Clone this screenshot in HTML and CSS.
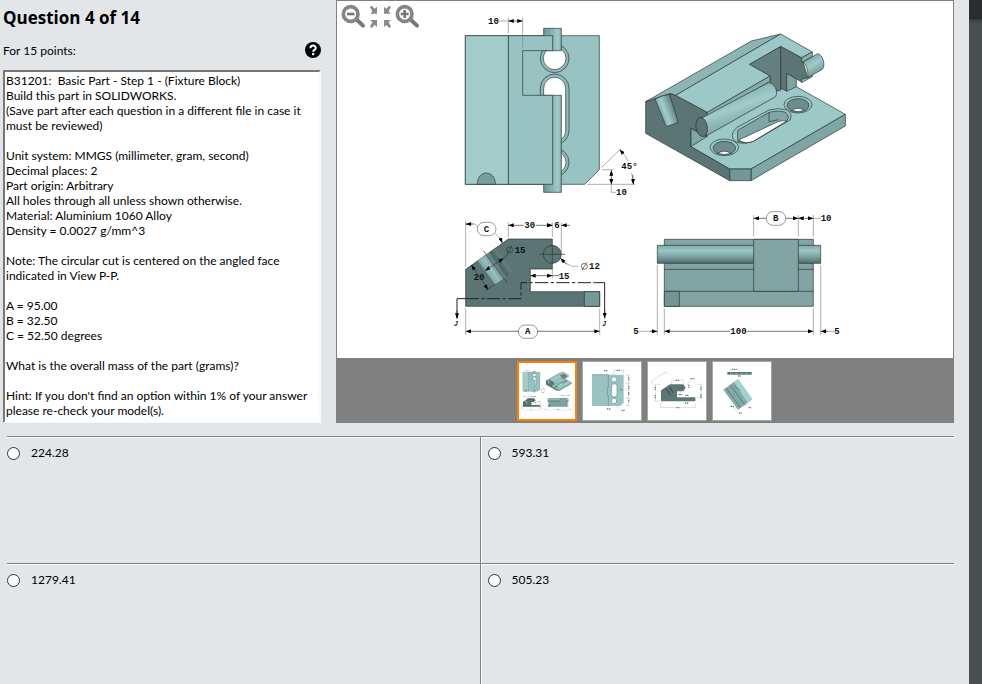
FILE: index.html
```html
<!DOCTYPE html>
<html lang="en">
<head>
  <meta charset="UTF-8">
  <meta name="viewport" content="width=device-width, initial-scale=1.0">
  <title>Question 4 of 14</title>
  <link rel="stylesheet" href="styles.css">
</head>
<body>

  <main class="exam">
    <div class="top">

      <section class="question">
        <h1>Question 4 of 14</h1>
        <div class="points">
          <label for="question-text">For 15 points:</label>
          <button type="button" class="help" aria-label="Help">
            <svg viewBox="0 0 16 16">
              <circle cx="8" cy="8" r="8" fill="#000"/>
              <path d="M5.4 6.2C5.4 2.7 10.8 2.8 10.8 6C10.8 7.9 8.1 7.8 8.1 9.7" fill="none" stroke="#fff" stroke-width="2"/>
              <rect x="7" y="11" width="2.2" height="2.2" fill="#fff"/>
            </svg>
          </button>
        </div>
        <textarea id="question-text" class="question-text" readonly>B31201:  Basic Part - Step 1 - (Fixture Block)
Build this part in SOLIDWORKS.
(Save part after each question in a different file in case it must be reviewed)

Unit system: MMGS (millimeter, gram, second)
Decimal places: 2
Part origin: Arbitrary
All holes through all unless shown otherwise.
Material: Aluminium 1060 Alloy
Density = 0.0027 g/mm^3

Note: The circular cut is centered on the angled face indicated in View P-P.

A = 95.00
B = 32.50
C = 52.50 degrees

What is the overall mass of the part (grams)?

Hint: If you don't find an option within 1% of your answer please re-check your model(s).</textarea>
      </section>

      <section class="viewer">
        <div class="tools">
          <button type="button" aria-label="Zoom out">
            <svg viewBox="0 0 75 75">
              <path d="M48 48L66 65" stroke="#777" stroke-width="12" stroke-linecap="round"/>
              <circle cx="29" cy="30" r="22" fill="#fff" stroke="#858585" stroke-width="11"/>
              <path d="M18 30H40" stroke="#777" stroke-width="8"/>
            </svg>
          </button>
          <button type="button" aria-label="Fit to window">
            <svg viewBox="0 0 75 75">
              <g id="fit-arrow" fill="#8a8a8a">
                <path d="M6 9L11 5L20 14L27 8V29H7L13 22Z"/>
              </g>
              <use href="#fit-arrow" transform="matrix(-1 0 0 1 75 0)"/>
              <use href="#fit-arrow" transform="matrix(1 0 0 -1 0 77)"/>
              <use href="#fit-arrow" transform="matrix(-1 0 0 -1 75 77)"/>
            </svg>
          </button>
          <button type="button" aria-label="Zoom in">
            <svg viewBox="0 0 75 75">
              <path d="M48 48L66 65" stroke="#777" stroke-width="12" stroke-linecap="round"/>
              <circle cx="29" cy="30" r="22" fill="#fff" stroke="#858585" stroke-width="11"/>
              <path d="M17 30H41M29 18V42" stroke="#777" stroke-width="8"/>
            </svg>
          </button>
        </div>

        <svg class="drawing" viewBox="337 1 616 357" role="img" aria-label="Fixture block, four views">
          <defs>
            <linearGradient id="rod-v">
              <stop offset="0" stop-color="#6f9695"/><stop offset=".5" stop-color="#87b3b2"/><stop offset=".8" stop-color="#a1cccb"/><stop offset="1" stop-color="#82aead"/>
            </linearGradient>
            <linearGradient id="rod-h" x2="0" y2="1">
              <stop offset="0" stop-color="#80aaa9"/><stop offset=".3" stop-color="#9cc8c7"/><stop offset=".6" stop-color="#7fa6a5"/><stop offset="1" stop-color="#516b6a"/>
            </linearGradient>
            <linearGradient id="rod-iso" x1=".3" y1=".2" x2=".65" y2=".9">
              <stop offset="0" stop-color="#84adac"/><stop offset=".4" stop-color="#a1cccb"/><stop offset="1" stop-color="#6c9190"/>
            </linearGradient>
            <linearGradient id="bore" gradientUnits="userSpaceOnUse" x1="98" y1="167" x2="150" y2="131">
              <stop offset="0" stop-color="#7ba3a2"/><stop offset=".3" stop-color="#96c1c0"/><stop offset=".55" stop-color="#6d9291"/><stop offset=".75" stop-color="#4b6362"/><stop offset="1" stop-color="#648281"/>
            </linearGradient>
            <linearGradient id="bore-iso" gradientUnits="userSpaceOnUse" x1="72" y1="280" x2="118" y2="262">
              <stop offset="0" stop-color="#7ba2a1"/><stop offset=".4" stop-color="#a1cccb"/><stop offset="1" stop-color="#62807f"/>
            </linearGradient>
            <marker id="arrow" viewBox="0 0 16 12" refX="16" refY="6" markerWidth="16" markerHeight="12" markerUnits="userSpaceOnUse" orient="auto-start-reverse">
              <path d="M0 0L16 6L0 12Z"/>
            </marker>
          </defs>

          <g id="views">
            <!-- top view -->
            <svg x="450" y="0" width="200" height="210" viewBox="0 0 600 630">
              <g class="part">
                <path d="M46 107H448V509L404 553H46Z" fill="#98c3c2"/>
                <circle cx="314" cy="175" r="43" fill="#8fbab9"/>
                <circle cx="314" cy="175" r="34" fill="#fff"/>
                <rect x="271" y="222" width="86" height="213" rx="43" fill="#8fbab9"/>
                <rect x="281" y="232" width="66" height="193" rx="33" fill="#fff"/>
                <circle cx="314" cy="487" r="43" fill="#8fbab9"/>
                <circle cx="314" cy="487" r="34" fill="#fff"/>
                <rect x="281" y="85" width="53" height="67" fill="url(#rod-v)"/>
                <rect x="281" y="286" width="53" height="291" fill="url(#rod-v)"/>
                <path d="M175 107H308V152H218V286H308V553H175Z" fill="#98c3c2"/>
                <path d="M46 107H175V553H46Z" fill="#a3cbca"/>
                <path d="M82 553C82 508 136 508 136 553Z" fill="#789e9d"/>
              </g>
              <g class="leader">
                <path d="M175 100V53M218 146V53M147 63H175M456 509H491M412 553H556M454 503L513 446M484 553V577H498M545 520Q550 535 550 553M513 453Q530 470 535 485"/>
              </g>
              <g class="dim">
                <path class="both" d="M175 63H218"/>
                <path class="both" d="M484 511V553"/>
                <path class="end" d="M548 525L550 553"/>
                <path class="end" d="M521 462L509 449"/>
              </g>
              <text x="114" y="71">10</text>
              <text x="514" y="506">45°</text>
              <text x="498" y="585">10</text>
            </svg>

            <!-- isometric view -->
            <svg x="635" y="20" width="220" height="180" viewBox="0 0 660 540">
              <g class="part">
                <path d="M168 380L284 447H348L631 283L484 200L425 205L217 325L168 325Z" fill="#9cc8c7"/>
                <path d="M348 447L631 283V318L348 482Z" fill="#7fa5a4"/>
                <path d="M284 447H348V482H284Z" fill="#739796"/>
                <path d="M32 245L105 222L125 225L217 277V350L168 325V380L284 447V482L32 340Z" fill="#5a7574"/>
                <path d="M168 325L214 351L168 380Z" fill="#7fa5a4"/>
                <path d="M343 133L437 79V211L425 213L405 190V168Z" fill="#657f7e"/>
                <path d="M437 79L500 113L518 172L500 178V186L455 160V213L437 205Z" fill="#5a7574"/>
                <path d="M455 160L484 177V200L455 214Z" fill="#7fa5a4"/>
                <path d="M500 178L518 174L532 166V170L500 188Z" fill="#9cc8c7"/>
                <path d="M32 245L349 63L437 42L122 226L105 220Z" fill="#8cb5b4"/>
                <path d="M122 226L437 42L532 96L500 113L437 79L343 133L405 168L217 277Z" fill="#9cc8c7"/>
                <path d="M532 96V110L500 128V113Z" fill="#86adac"/>
                <path d="M504 126L548 101C563 104 573 135 562 148L518 173C521 155 515 136 504 126Z" fill="url(#rod-iso)"/>
                <path d="M217 277L405 168V184L217 292Z" fill="#86adac"/>
                <path d="M200 294L400 188C419 190 430 211 422 230L215 347Z" fill="url(#rod-iso)"/>
                <ellipse cx="200" cy="321" rx="17" ry="29" transform="rotate(-10 200 321)" fill="#5a7574"/>
                <path d="M60 237L84 227L108 222L105 228L130 307L94 320Z" fill="url(#bore-iso)"/>
                <ellipse cx="268" cy="382" rx="43" ry="25" fill="#9cc8c7"/>
                <ellipse cx="268" cy="384" rx="34" ry="20" fill="#6b8d8c"/>
                <path d="M248 400Q268 387 288 400Q268 407 248 400Z" fill="#fff"/>
                <ellipse cx="489" cy="254" rx="42" ry="25" fill="#9cc8c7"/>
                <ellipse cx="489" cy="256" rx="33" ry="20" fill="#6b8d8c"/>
                <path d="M469 271Q489 259 509 271Q489 279 469 271Z" fill="#fff"/>
                <path d="M306 322L402 270Q430 262 457 270Q474 282 465 300L362 360Q335 375 304 367Q278 348 306 322Z" fill="#9cc8c7"/>
                <path d="M308 331L402 277Q430 270 452 277Q466 289 455 303L355 364Q330 373 308 364Z" fill="#7fa5a4"/>
                <path d="M311 360L425 307Q443 299 455 303L355 364Q330 373 311 360Z" fill="#fff"/>
                <path d="M402 277V305L430 299" fill="none"/>
              </g>
            </svg>

            <!-- side view -->
            <svg x="445" y="205" width="180" height="150" viewBox="0 0 540 450">
              <g class="part">
                <path d="M62 193L190 102H322V192H256V260H464V304H62Z" fill="#5a7574"/>
                <path d="M418 260H464V304H418Z" fill="#769998"/>
                <circle cx="322" cy="148" r="27" fill="#5a7574"/>
                <path d="M98 167L150 131L203 202L150 238Z" fill="url(#bore)" stroke="none"/>
              </g>
              <g class="leader">
                <path d="M62 186V47M190 96V53M322 96V53M349 142V53M256 198V220M322 192V220M62 311V390M464 311V390M400 184H382Q365 180 352 164M150 85Q165 97 171 112M62 57H90L97 66"/>
              </g>
              <path class="center" d="M284 148H360M322 120V176M115 137L187 234M123 256L150 238"/>
              <path class="cut" d="M36 340V281H62M479 340V233H452"/>
              <path class="cut" d="M62 281H228V233H452" stroke-dasharray="40 7 10 7"/>
              <g class="dim">
                <path class="both" d="M190 61H322"/>
                <path class="both" d="M62 379H464"/>
                <path class="both" d="M256 212H322"/>
                <path class="both" d="M120 197L176 160"/>
                <path class="both" d="M79 180L129 254"/>
                <path class="end" d="M85 57H62"/>
                <path class="end" d="M165 98L172 114"/>
                <path class="end" d="M375 61H349"/>
                <path class="end" d="M306 61H322"/>
                <path class="end" d="M365 178L346 160"/>
                <path class="end" d="M36 315V341"/>
                <path class="end" d="M479 315V340"/>
                <path d="M322 212H343M176 160L190 146"/>
              </g>
              <rect class="tag" x="97" y="52" width="56" height="40" rx="20"/>
              <rect class="tag" x="220" y="360" width="58" height="40" rx="20"/>
              <rect x="236" y="48" width="36" height="24" fill="#fff"/>
              <rect x="328" y="48" width="16" height="24" fill="#fff"/>
              <rect x="86" y="204" width="33" height="22" fill="#5a7574"/>
              <text x="116" y="80">C</text>
              <text x="240" y="388">A</text>
              <text x="238" y="69">30</text>
              <text x="328" y="69">6</text>
              <text x="209" y="143">15</text>
              <text x="86" y="224">20</text>
              <text x="432" y="193">12</text>
              <text x="341" y="221">15</text>
              <!-- diameter signs -->
              <g class="dim">
                <circle cx="194" cy="134" r="9"/>
                <path d="M187 146L201 122"/>
                <circle cx="418" cy="184" r="9"/>
                <path d="M411 196L425 172"/>
              </g>
              <text class="section" x="27" y="362">J</text>
              <text class="section" x="472" y="362">J</text>
            </svg>

            <!-- front view -->
            <svg x="625" y="200" width="230" height="150" viewBox="0 0 690 450">
              <g class="part">
                <path d="M118 118H565V319H118Z" fill="#82a5a4"/>
                <path d="M118 208H565M118 274H565" fill="none"/>
                <path d="M97 136H587V190H97Z" fill="url(#rod-h)"/>
                <path d="M386 118H520V274H386Z" fill="#82a5a4"/>
                <path d="M118 274H163V319H118Z" fill="#739594"/>
              </g>
              <g class="leader">
                <path d="M386 110V45M520 110V45M565 110V45M97 195V405M118 326V405M565 326V405M587 195V405M565 55H588M40 394H80M604 394H630"/>
              </g>
              <g class="dim">
                <path class="both" d="M386 55H520"/>
                <path class="both" d="M520 55H565"/>
                <path class="both" d="M118 394H565"/>
                <path class="end" d="M75 394H97"/>
                <path class="end" d="M609 394H587"/>
              </g>
              <rect class="tag" x="424" y="35" width="58" height="41" rx="20"/>
              <rect x="315" y="382" width="50" height="24" fill="#fff"/>
              <text x="444" y="63">B</text>
              <text x="587" y="63">10</text>
              <text x="316" y="402">100</text>
              <text x="25" y="402">5</text>
              <text x="628" y="402">5</text>
            </svg>
          </g>
        </svg>

        <div class="thumbs">
          <button type="button" class="thumb active" aria-label="All views">
            <svg viewBox="435 -35 436 436"><use href="#views"/></svg>
          </button>
          <button type="button" class="thumb" aria-label="Top view">
            <svg viewBox="219 21 174 174">
              <path d="M246 59H341V142L331 153H246Z" fill="#98c3c2"/>
              <path d="M246 59H295V97H292V120H295V153" fill="none" stroke="#6c8e8d" stroke-width="2"/>
              <g fill="#fff" stroke="#6c8e8d" stroke-width="2">
                <circle cx="312" cy="73" r="8"/>
                <rect x="305" y="86" width="16" height="40" rx="8"/>
                <circle cx="312" cy="138" r="8"/>
              </g>
              <path class="mini" d="M312 65V45M341 57V42M347 60H360M356 60V152M345 85H360M345 105H360M345 130H360M347 152H360M312 46H340M316 150L330 164"/>
              <path class="mini-text" d="M282 47H294M320 46H330M356 66V76M356 92V102M356 112V120M356 134V142M291 162H303M334 166H344M330 104H337"/>
            </svg>
          </button>
          <button type="button" class="thumb" aria-label="Section view">
            <svg viewBox="414 21 174 174">
              <path d="M453 106L480 88H520L527 98L520 109H501V127H556V139H453Z" fill="#5a7574"/>
              <path d="M468 101L482 121M478 95L489 113" stroke="#344746" stroke-width="3"/>
              <path class="mini" d="M423 80L468 50M423 80L429 88M468 50L474 58M485 75H520M485 75V87M520 75V87M452 144V160M556 144V160M452 157H556M436 88V138M432 88H450M432 138H450M573 88V138M560 88H577M560 127H577M530 90L545 73M510 109V120M528 120H535"/>
              <path class="mini-text" d="M497 76H508M541 71H555M436 95V105M436 120V130M573 95V105M573 118V128M499 158H508M505 119H518M525 121H536M525 144H536M536 89V98"/>
            </svg>
          </button>
          <button type="button" class="thumb" aria-label="Auxiliary view">
            <svg viewBox="609 21 174 174">
              <path d="M652 51H725V59H652Z" fill="#5a7574"/>
              <path d="M660 55H718" stroke="#98c3c2" stroke-width="2" stroke-dasharray="9 6"/>
              <path d="M640 104L684 72L727 133L684 164Z" fill="#82a9a8"/>
              <path d="M672 81L684 72L727 133L713 143Z" fill="#a3d2d1"/>
              <path d="M648 99L692 158M661 90L704 149M674 93L691 107" stroke="#4d6766" stroke-width="2"/>
              <path class="mini" d="M659 44H685M659 44V50M685 62H692M662 150L683 168M700 155L715 146M717 155L724 160"/>
              <path class="mini-text" d="M666 43H680M684 63H692M662 154H672M687 174H695M716 158H724"/>
            </svg>
          </button>
        </div>
      </section>

    </div>

    <form class="answers">
      <label class="answer"><input type="radio" name="answer" value="224.28"><span>224.28</span></label>
      <label class="answer"><input type="radio" name="answer" value="593.31"><span>593.31</span></label>
      <label class="answer"><input type="radio" name="answer" value="1279.41"><span>1279.41</span></label>
      <label class="answer"><input type="radio" name="answer" value="505.23"><span>505.23</span></label>
    </form>
  </main>

  <aside class="backdrop"></aside>

</body>
</html>
```
FILE: styles.css
```css
* { margin: 0; padding: 0; box-sizing: border-box; }

body {
  display: flex;
  min-height: 100vh;
  background: #e2e6e9;
  color: #000;
  font-family: Lato, "Open Sans", sans-serif;
  font-size: 12px;
  line-height: 15px;
}

button {
  border: 0;
  background: none;
  cursor: pointer;
}

svg { display: block; }

.exam {
  flex: 1;
  display: flex;
  flex-direction: column;
  padding-right: 15px;
}

.backdrop {
  width: 13px;
  background: linear-gradient(#2b2c30 0, #2b2c30 18px, #202224 18px, #3c4244 20px, #484f51 24px);
}

.top {
  display: flex;
  gap: 15px;
  padding-left: 3px;
}

/* question */
.question {
  display: flex;
  flex-direction: column;
  width: 318px;
}

h1 {
  padding-top: 6px;
  font-family: "Open Sans", "Noto Sans", sans-serif;
  font-size: 17px;
  line-height: 24px;
  font-weight: 700;
}

.points {
  display: flex;
  align-items: center;
  justify-content: space-between;
  height: 40px;
}

.help {
  width: 16px;
  height: 16px;
}

.question-text {
  flex: 1;
  width: 100%;
  padding: 1px;
  border: 2px solid;
  border-color: #777 #fafafa #fafafa #777;
  background: #fff;
  color: inherit;
  font: inherit;
  resize: none;
  overflow: hidden;
  outline: none;
}

/* viewer */
.viewer {
  flex: 1;
  position: relative;
  border: 1px solid #808080;
  border-bottom: 0;
  background: #fff;
}

.tools {
  position: absolute;
  top: 3px;
  left: 4px;
  display: flex;
  gap: 2px;
}

.tools button {
  width: 25px;
  height: 25px;
}

.drawing {
  width: 100%;
  height: auto;
}

.part {
  stroke: #263333;
  stroke-width: 2;
  stroke-linejoin: round;
}

.leader {
  fill: none;
  stroke: #888;
  stroke-width: 2;
}

.dim, .center {
  fill: none;
  stroke: #333;
  stroke-width: 2;
}

.both {
  marker-start: url(#arrow);
  marker-end: url(#arrow);
}

.end {
  marker-end: url(#arrow);
}

.cut {
  fill: none;
  stroke: #222;
  stroke-width: 3;
}

.tag {
  fill: #fff;
  stroke: #666;
  stroke-width: 2;
}

.drawing text, .thumb text {
  fill: #111;
  font-family: "Liberation Mono", monospace;
  font-size: 27px;
  font-weight: 700;
}

.drawing .section, .thumb .section {
  font-size: 20px;
  font-style: italic;
}

.thumbs {
  display: flex;
  justify-content: center;
  gap: 5px;
  padding: 3px 1px 2px 0;
  background: #808080;
}

.thumb {
  width: 60px;
  height: 60px;
  border: 1px solid #a9a7a2;
  background: #fff;
}

.thumb.active {
  border: 2px solid #ff8000;
}

.mini {
  fill: none;
  stroke: #ccc;
  stroke-width: 2;
}

.mini-text {
  fill: none;
  stroke: #777;
  stroke-width: 4;
  stroke-dasharray: 4 2;
}

/* answers */
.answers {
  flex: 1;
  display: grid;
  grid-template-columns: calc(50% - 1px) 1fr;
  grid-template-rows: 127px 1fr;
  margin: 13px 0 0 7px;
}

.answer {
  display: flex;
  align-items: flex-start;
  gap: 11px;
  padding-top: 8px;
  border-top: 1px solid #808080;
  box-shadow: inset 0 1px #fff;
}

.answer:nth-child(even) {
  padding-left: 7px;
  border-left: 1px solid #808080;
  box-shadow: inset 1px 1px #fff;
}

.answer input {
  appearance: none;
  width: 13px;
  height: 13px;
  margin-top: 2px;
  border: 1px solid #333;
  border-radius: 50%;
  background: #fff;
}

.answer input:checked {
  background: radial-gradient(#333 3px, #fff 4px);
}
```
